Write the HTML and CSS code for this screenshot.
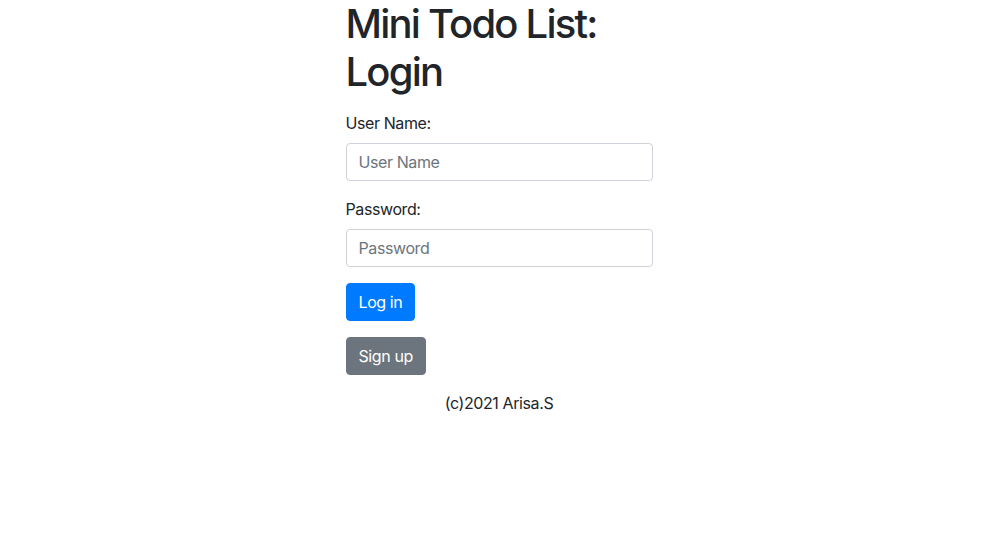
FILE: index.html
```html
<!DOCTYPE html>
<html lang="en">
<head>
<meta charset="utf-8">
<title>Mini Todo List: Login</title>
<link rel="stylesheet" href="styles.css">
</head>
<body>
<main class="wrap">
  <h1 class="title">Mini Todo List: Login</h1>
  <form class="form">
    <div class="group">
      <label class="label" for="user">User Name:</label>
      <input class="input" id="user" type="text" placeholder="User Name">
    </div>
    <div class="group">
      <label class="label" for="pass">Password:</label>
      <input class="input" id="pass" type="password" placeholder="Password">
    </div>
    <div class="group">
      <button class="btn btn-primary" type="button">Log in</button>
    </div>
    <div class="group">
      <button class="btn btn-secondary" type="button">Sign up</button>
    </div>
  </form>
  <footer class="footer">(c)2021 Arisa.S</footer>
</main>
</body>
</html>
```
FILE: styles.css
```css
* { box-sizing: border-box; }
html, body { margin: 0; padding: 0; background: #fff; }
body {
  font-family: Inter, "Noto Sans", "Liberation Sans", sans-serif;
  font-size: 16px;
  line-height: 1.5;
  color: #212529;
  letter-spacing: -0.4px;
}
.wrap {
  width: 307px;
  margin: 0 auto;
}
.title {
  margin: 0 0 15px;
  font-size: 40px;
  font-weight: 500;
  line-height: 48px;
  letter-spacing: -1.8px;
}
.form { margin: 0; }
.group { margin-bottom: 16px; }
.label {
  display: inline-block;
  margin-bottom: 8px;
  line-height: 24px;
}
.input {
  display: block;
  width: 100%;
  height: 38px;
  padding: 6px 12px;
  font: inherit;
  font-size: 16px;
  line-height: 24px;
  letter-spacing: -0.4px;
  color: #495057;
  background: #fff;
  border: 1px solid #ced4da;
  border-radius: 4px;
}
.input::placeholder { color: #6c757d; opacity: 1; }
.btn {
  display: inline-block;
  height: 38px;
  padding: 6px 12px;
  font: inherit;
  font-size: 16px;
  line-height: 24px;
  letter-spacing: -0.4px;
  color: #fff;
  border: 1px solid transparent;
  border-radius: 4px;
}
.btn-primary { background: #007bff; border-color: #007bff; }
.btn-secondary { background: #6c757d; border-color: #6c757d; }
.footer {
  text-align: center;
  line-height: 24px;
}
```
